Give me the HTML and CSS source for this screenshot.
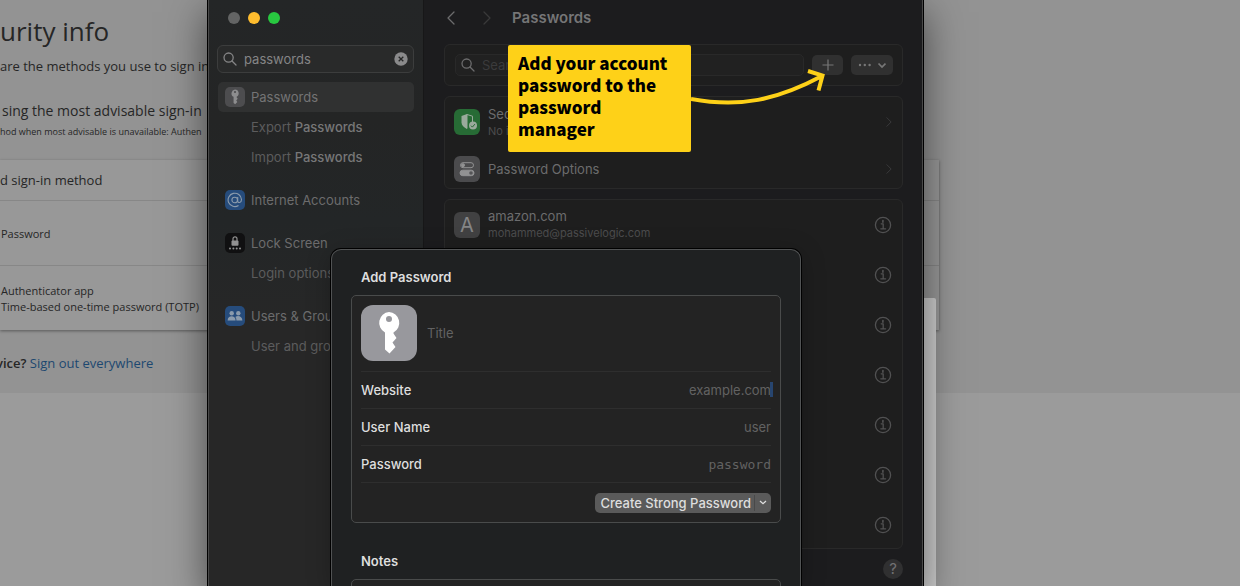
FILE: index.html
```
<!DOCTYPE html>
<html lang="en">
<head>
<meta charset="utf-8">
<title>Passwords</title>
<link rel="stylesheet" href="styles.css">
</head>
<body>
<svg class="defs" width="0" height="0" aria-hidden="true">
  <symbol id="search" viewBox="0 0 14 14"><circle cx="5.6" cy="5.6" r="4.6"/><path d="M9 9l4 4"/></symbol>
  <symbol id="info" viewBox="0 0 18 18"><circle cx="9" cy="9" r="7.6"/><path d="M7.2 7.8h2v5M6.8 12.8h4.8"/><path d="M8.9 4.5v1.6" stroke-width="1.7"/></symbol>
  <symbol id="key" viewBox="0 0 56 56"><path fill-rule="evenodd" d="M28 7a10.900 10.900 0 0 1 4.500 20.500V28.500L35.500 33 31.500 37.500 34.500 42 28.500 48.500 24 44.500V27.500A10.900 10.900 0 0 1 28 7zM28 11a3 3 0 1 0 0 6 3 3 0 0 0 0-6z"/></symbol>
  <symbol id="chevron" viewBox="0 0 8 14"><path d="M1 1l6 6-6 6"/></symbol>
  <symbol id="chevron-left" viewBox="0 0 8 14"><path d="M7 1L1 7l6 6"/></symbol>
</svg>

<main class="account">
  <h1>urity info</h1>
  <p class="lead">are the methods you use to sign in</p>
  <p class="advice">sing the most advisable sign-in</p>
  <p class="fallback">hod when most advisable is unavailable: Authen</p>
  <section class="methods">
    <div class="add-method">d sign-in method</div>
    <div class="method">Password</div>
    <div class="method"><span>Authenticator app</span><span>Time-based one-time password (TOTP)</span></div>
  </section>
  <p class="device"><b>vice?</b> <a href="#">Sign out everywhere</a></p>
</main>

<div class="panel-behind"></div>

<div class="window">
  <aside class="sidebar">
    <div class="lights"><i class="light"></i><i class="light amber"></i><i class="light green"></i></div>
    <div class="side-search">
      <svg class="line" width="14" height="14"><use href="#search"/></svg>
      <input type="text" value="passwords" aria-label="Search settings">
      <button class="clear" aria-label="Clear"><svg width="14" height="14" viewBox="0 0 14 14"><circle cx="7" cy="7" r="6.700" fill="#8a8a8b"/><path d="M4.700 4.700l4.600 4.600M9.300 4.700L4.700 9.300" stroke="#262727" stroke-width="1.300"/></svg></button>
    </div>
    <nav>
      <div class="nav-group">
        <a href="#" class="selected"><span class="tile gray"><svg width="20" height="20"><use href="#key"/></svg></span>Passwords</a>
        <a href="#" class="sub">Export <b>Passwords</b></a>
        <a href="#" class="sub">Import <b>Passwords</b></a>
      </div>
      <div class="nav-group">
        <a href="#"><span class="tile blue"><svg width="16" height="16" viewBox="0 0 16 16" fill="none" stroke="#8b9bac" stroke-width="1.100"><circle cx="7.700" cy="8" r="2.800"/><path d="M10.700 5v4.200c0 2 3.800 2 3.800-1.700A6.700 6.700 0 1 0 11.500 13.500"/></svg></span>Internet Accounts</a>
      </div>
      <div class="nav-group">
        <a href="#"><span class="tile black"><svg width="20" height="20" viewBox="0 0 20 20" fill="#929292"><rect x="6.500" y="7.600" width="7" height="5.200" rx="1"/><path d="M8 8V5.800a2 2 0 0 1 4 0V8" fill="none" stroke="#929292" stroke-width="1.200"/><circle cx="5" cy="15.600" r="1"/><circle cx="8.400" cy="15.600" r="1"/><circle cx="11.700" cy="15.600" r="1"/><circle cx="15" cy="15.600" r="1"/></svg></span>Lock Screen</a>
        <a href="#" class="sub">Login options</a>
      </div>
      <div class="nav-group">
        <a href="#"><span class="tile blue"><svg width="20" height="20" viewBox="0 0 20 20" fill="#8b9bac"><circle cx="6.700" cy="7.200" r="2.200"/><path d="M2.600 14.500c0-5.600 8-5.600 8 0z"/><circle cx="13.300" cy="7.200" r="2.200"/><path d="M11.400 14.500c0-2-.4-2.800-1.100-3.500 2.500-2.200 7.100-.8 7.100 3.500z"/></svg></span>Users &amp; Groups</a>
        <a href="#" class="sub">User and groups</a>
      </div>
    </nav>
  </aside>

  <section class="content">
    <header class="titlebar">
      <button class="back" aria-label="Back"><svg class="line" width="8" height="14"><use href="#chevron-left"/></svg></button>
      <button class="forward" aria-label="Forward"><svg class="line" width="8" height="14"><use href="#chevron"/></svg></button>
      <h2>Passwords</h2>
    </header>
    <div class="card toolbar">
      <label class="search"><svg class="line" width="14" height="14"><use href="#search"/></svg><input type="text" placeholder="Sear" aria-label="Search passwords"></label>
      <button class="tool add" aria-label="Add"><svg width="12" height="12" viewBox="0 0 12 12"><path d="M6 .5v11M.5 6h11"/></svg></button>
      <button class="tool more" aria-label="More"><svg width="28" height="10" viewBox="0 0 28 10"><g fill="#777" stroke="none"><circle cx="2" cy="5" r="1.200"/><circle cx="6.800" cy="5" r="1.200"/><circle cx="11.600" cy="5" r="1.200"/></g><path d="M20.500 3.500L24 7l3.500-3.500" stroke-width="1.700"/></svg></button>
    </div>
    <div class="card options">
      <a href="#" class="option"><span class="badge green-badge"><svg width="26" height="26" viewBox="0 0 26 26"><path d="M13 5L7.500 7v6.500c0 3 2.500 5 5.500 6.500z" fill="#9aaa9c"/><path d="M13 5.500l5.500 1.700v6M13 19.500V5.500" fill="none" stroke="#9aaa9c" stroke-width="1"/><circle cx="19" cy="16.500" r="4" fill="#9aaa9c"/><path d="M17 16.700l1.400 1.400 2.500-3" fill="none" stroke="#276b35" stroke-width="1"/></svg></span><span class="label">Sec<small>No i</small></span><svg class="line arrow" width="6" height="10"><use href="#chevron"/></svg></a>
      <a href="#" class="option"><span class="badge"><svg width="26" height="26" viewBox="0 0 26 26" fill="none" stroke="#929293"><rect x="6.500" y="6.700" width="13" height="5" rx="2.500"/><circle cx="9" cy="9.200" r="1.500" fill="#929293"/><rect x="6" y="14.200" width="14" height="5.500" rx="2.750" fill="#929293"/><circle cx="17" cy="17" r="1.800" fill="#555557" stroke="none"/></svg></span><span class="label">Password Options</span><svg class="line arrow" width="6" height="10"><use href="#chevron"/></svg></a>
    </div>
    <div class="card accounts">
      <div class="entry"><span class="badge letter">A</span><span class="label">amazon.com<small>mohammed@passivelogic.com</small></span><button aria-label="Details"><svg class="line" width="18" height="18"><use href="#info"/></svg></button></div>
      <div class="entry"><button aria-label="Details"><svg class="line" width="18" height="18"><use href="#info"/></svg></button></div>
      <div class="entry"><button aria-label="Details"><svg class="line" width="18" height="18"><use href="#info"/></svg></button></div>
      <div class="entry"><button aria-label="Details"><svg class="line" width="18" height="18"><use href="#info"/></svg></button></div>
      <div class="entry"><button aria-label="Details"><svg class="line" width="18" height="18"><use href="#info"/></svg></button></div>
      <div class="entry"><button aria-label="Details"><svg class="line" width="18" height="18"><use href="#info"/></svg></button></div>
      <div class="entry"><button aria-label="Details"><svg class="line" width="18" height="18"><use href="#info"/></svg></button></div>
    </div>
    <button class="help">?</button>
  </section>

  <form class="sheet">
    <h3>Add Password</h3>
    <div class="fields">
      <div class="field title-field">
        <span class="key-tile"><svg width="56" height="56"><use href="#key"/></svg></span>
        <input type="text" placeholder="Title" aria-label="Title">
      </div>
      <div class="field website"><label for="site">Website</label><input id="site" type="text" placeholder="example.com"></div>
      <div class="field"><label for="user">User Name</label><input id="user" type="text" placeholder="user"></div>
      <div class="field"><label for="pass">Password</label><input id="pass" class="mono" type="text" placeholder="password"></div>
      <div class="actions">
        <button type="button" class="create"><span>Create Strong Password</span><svg width="8" height="5" viewBox="0 0 8 5"><path d="M1 1l3 2.700L7 1"/></svg></button>
      </div>
    </div>
    <h3 class="notes-title">Notes</h3>
    <div class="fields notes"></div>
  </form>
</div>

<div class="callout">Add your account password to the password manager</div>
<svg class="pointer" width="140" height="44" viewBox="0 0 140 44"><path d="M0 33C49 42 86 34 131 10M117 5l14.500 4.500-4 15"/></svg>
</body>
</html>
```

FILE: styles.css
```
* { box-sizing: border-box; }
body {
  margin: 0;
  min-height: 100vh;
  position: relative;
  overflow: hidden;
  background: #9b9b9b;
  color: #262626;
  font-family: Inter, "Liberation Sans", sans-serif;
  font-size: 13px;
}
h1, h2, h3, p { margin: 0; }
button, input { font: inherit; color: inherit; border: 0; padding: 0; background: none; outline: 0; min-width: 0; }
a { color: inherit; text-decoration: none; }
.defs { position: absolute; }
.line { fill: none; stroke: currentColor; stroke-width: 1.3; stroke-linecap: round; stroke-linejoin: round; flex: none; }

/* account page */
.account {
  height: 393px;
  background: #939393;
  font-family: "Open Sans", "Noto Sans", sans-serif;
  white-space: nowrap;
}
.account h1 { padding-top: 11px; font-size: 26px; font-weight: 400; line-height: 40px; }
.lead { margin-top: 5px; font-size: 13px; line-height: 20px; }
.advice { margin: 25px 0 0 2px; font-size: 14px; line-height: 20px; }
.fallback { margin: 3px 0 20px; font-size: 9px; line-height: 16px; }
.methods {
  margin-right: 301px;
  background: #989898;
  font-size: 11px;
  line-height: 16px;
  box-shadow: 0 1px 3px rgba(0, 0, 0, .4);
}
.add-method { padding: 10px 0; font-size: 13px; line-height: 20px; }
.method {
  display: flex;
  flex-direction: column;
  justify-content: center;
  height: 65px;
  padding: 2px 0 0 1px;
  border-top: 1px solid #878787;
}
.device { margin: 23px 0 0 -4px; font-size: 13px; line-height: 20px; }
.device b { font-weight: 600; }
.device a { color: #1d4870; }

.panel-behind {
  position: absolute;
  top: 298px;
  right: 304px;
  bottom: 0;
  width: 40px;
  border-top-right-radius: 2px;
  background: #cfcfcf;
}

/* settings window */
.window {
  position: absolute;
  top: 0;
  bottom: 0;
  left: 208px;
  right: 317px;
  display: flex;
  border: 1px solid #4a4a4a;
  border-width: 0 1px;
  background: #1c1c1e;
  color: #6c6c6d;
  box-shadow: 0 0 0 1px #000, 0 14px 36px 2px rgba(0, 0, 0, .5);
}
.sidebar {
  width: 215px;
  padding: 12px 9px 0 8px;
  border-right: 1px solid #171718;
  background: linear-gradient(#242627, #242525 120px, #232627 220px, #272727 330px);
}
.lights { display: flex; gap: 8px; padding-left: 11px; }
.light { width: 12px; height: 12px; border-radius: 50%; background: #636464; }
.amber { background: #febc2e; }
.green { background: #28c840; }
.side-search {
  display: flex;
  align-items: center;
  gap: 7px;
  height: 28px;
  margin-top: 21px;
  padding: 0 5px;
  border: 1px solid #3c3d3d;
  border-radius: 6px;
  background: #292a2a;
  color: #858586;
}
.side-search input { flex: 1; }
.clear { display: flex; }
.nav-group { margin: 0 0 13px 1px; }
nav { padding-top: 9px; }
.nav-group a {
  display: flex;
  align-items: center;
  gap: 6px;
  height: 30px;
  padding-left: 7px;
  border-radius: 5px;
  white-space: pre;
}
.nav-group .sub { gap: 0; padding-left: 33px; color: #5c5c5d; }
.sub b { font-weight: 500; color: #777778; }
.nav-group .selected { background: #303131; color: #747475; }
.tile {
  display: flex;
  align-items: center;
  justify-content: center;
  width: 20px;
  height: 20px;
  border-radius: 5px;
}
.gray { background: #4d4d4f; fill: #8d8d8e; }
.blue { background: #264c7c; }
.black { background: #101011; }

.content { flex: 1; padding: 0 19px 0 20px; min-width: 0; }
.titlebar { display: flex; align-items: center; height: 36px; margin-bottom: 8px; }
.titlebar h2 { font-size: 15px; font-weight: 600; line-height: 20px; color: #757576; }
.titlebar button { display: flex; width: 36px; padding-left: 3px; }
.titlebar .forward { width: 32px; color: #39393a; }
.card {
  margin-bottom: 10px;
  border: 1px solid #292929;
  border-radius: 6px;
  background: #1e1e1e;
}
.toolbar { display: flex; align-items: center; gap: 8px; height: 42px; padding: 0 9px 0 10px; }
.search {
  flex: 1;
  display: flex;
  align-items: center;
  gap: 7px;
  height: 22px;
  padding-left: 5px;
  border: 1px solid #292929;
  border-radius: 5px;
  background: #212121;
}
.search input { flex: 1; }
.search input::placeholder { color: #3b3b3c; opacity: 1; }
.tool {
  display: flex;
  align-items: center;
  justify-content: center;
  height: 20px;
  width: 31px;
  border-radius: 5px;
  background: #303030;
}
.more { width: 42px; }
.tool svg { fill: none; stroke: #777; stroke-width: 1.2; }
.option, .entry { display: flex; align-items: center; padding: 0 10px 0 9px; }
.option { height: 50px; }
.option + .option { height: 41px; padding-top: 3px; }
.badge {
  display: flex;
  flex: none;
  width: 26px;
  height: 26px;
  margin-right: 8px;
  border-radius: 6px;
  background: #4b4b4d;
}
.green-badge { background: #276b35; }
.letter { align-items: center; justify-content: center; font-size: 20px; color: #858586; background: #414142; }
.label { flex: 1; line-height: 17px; }
.label small { display: block; font-size: 11px; line-height: 16px; color: #4c4c4d; }
.arrow { color: #3b3b3c; }
.accounts { height: 350px; }
.entry { justify-content: flex-end; height: 50px; padding-bottom: 1px; }
.entry button { display: flex; color: #515152; }
.help {
  display: block;
  width: 20px;
  height: 20px;
  margin-left: auto;
  border-radius: 50%;
  background: #303031;
  color: #727273;
  font-size: 15px;
  line-height: 20px;
}

/* add password sheet */
.sheet {
  position: absolute;
  top: 249px;
  bottom: 0;
  left: 122px;
  right: 121px;
  padding: 17px 19px 0;
  overflow: hidden;
  border: 1px solid #515354;
  border-bottom: 0;
  border-radius: 10px 10px 0 0;
  background: #1f2122;
  color: #dedede;
  box-shadow: 0 0 0 1px #000, 0 4px 24px rgba(0, 0, 0, .25);
}
.sheet h3 { margin: 0 0 8px 10px; font-size: 13px; font-weight: 600; line-height: 20px; }
.fields { padding: 0 9px; border: 1px solid #494b4b; border-radius: 5px; background: #232323; }
.field {
  position: relative;
  display: flex;
  align-items: center;
  gap: 10px;
  height: 37px;
  border-bottom: 1px solid #2e2e2e;
  font-weight: 500;
}
.title-field { height: 76px; padding-bottom: 2px; }
.key-tile { display: flex; width: 56px; height: 56px; border-radius: 12px; background: #98989d; fill: #fff; }
.field input { flex: 1; font-weight: 400; text-align: right; }
.title-field input { text-align: left; }
.field input::placeholder { color: #626262; opacity: 1; }
.field .mono { font-family: "DejaVu Sans Mono", monospace; }
.website::after {
  content: "";
  position: absolute;
  right: -2px;
  top: 10px;
  width: 3px;
  height: 15px;
  background: #27456f;
}
.actions { display: flex; justify-content: flex-end; align-items: center; height: 39px; }
.create {
  display: flex;
  align-items: center;
  gap: 4px;
  height: 20px;
  padding: 0 4px 0 5px;
  border-radius: 5px;
  background: #5a5a5a;
  font-weight: 500;
}
.create svg { fill: none; stroke: #dedede; stroke-width: 1.3; }
.create span { padding-right: 3px; border-right: 1px solid #494949; }
.sheet .notes-title { margin-top: 28px; }
.notes { height: 60px; }

/* annotation */
.callout {
  position: absolute;
  top: 45px;
  left: 508px;
  width: 183px;
  padding: 7px 10px 12px;
  border-radius: 2px;
  background: #fed118;
  color: #000;
  font-family: "Noto Sans CJK SC", sans-serif;
  font-size: 17px;
  font-weight: 900;
  line-height: 22px;
}
.pointer { position: absolute; top: 66px; left: 691px; fill: none; stroke: #fed118; stroke-width: 4; }
```
